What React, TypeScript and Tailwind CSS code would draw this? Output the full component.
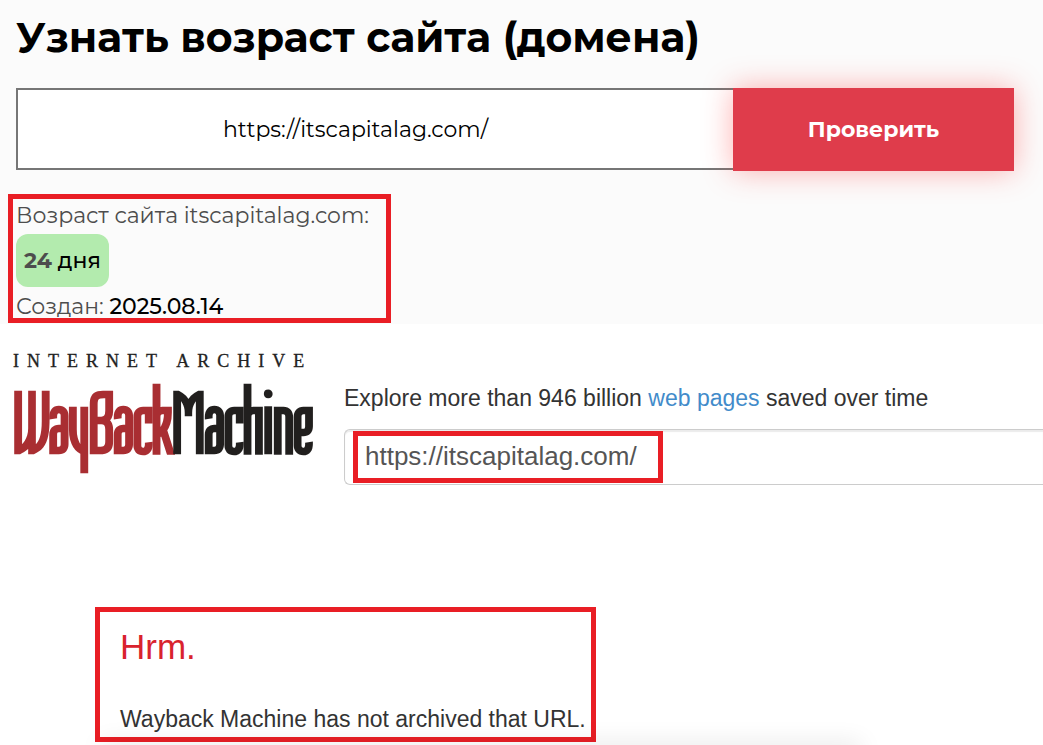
import React, { useState } from "react";

const WaybackLogo: React.FC = () => {
  return (
    <svg
      viewBox="0 0 304 124"
      className="w-[304px] shrink-0 overflow-visible"
      role="img"
      aria-label="Internet Archive Wayback Machine"
    >
      <text x="1" y="18" fontSize="18" letterSpacing="8" fill="#222222" stroke="#222222" strokeWidth="0.3" fontFamily="'Liberation Serif', serif">
        INTERNET ARCHIVE
      </text>
      <text
        x="1"
        y="103"
        fontSize="86"
        fontWeight="700"
        strokeWidth="2"
        fontFamily="'Tulpen One', 'League Gothic', 'Roboto Condensed', sans-serif"
      >
        <tspan fill="#a92e32" stroke="#a92e32">WayBack</tspan>
        <tspan fill="#211f1e" stroke="#211f1e">Machine</tspan>
      </text>
    </svg>
  );
};

const App: React.FC = () => {
  const [domain, setDomain] = useState("https://itscapitalag.com/");
  const [archiveUrl, setArchiveUrl] = useState("https://itscapitalag.com/");

  return (
    <div className="min-h-screen overflow-hidden bg-white font-['Liberation_Sans',Arial,sans-serif] text-[#333333]">
      <section className="bg-[#fbfbfb] font-[Montserrat,Inter,sans-serif]">
        <h1 className="pl-4 pt-3 text-[41px] leading-[50px] font-bold text-black">
          Узнать возраст сайта (домена)
        </h1>

        <form className="mt-[26px] ml-4 mr-[29px] flex items-start" onSubmit={(e) => e.preventDefault()}>
          <input
            type="text"
            aria-label="Адрес сайта"
            value={domain}
            onChange={(e) => setDomain(e.target.value)}
            className="h-[82px] min-w-0 flex-1 border-2 border-r-0 border-[#767676] bg-white pr-10 text-center text-[22px] text-black outline-none"
          />
          <button
            type="submit"
            className="h-[83px] w-[281px] bg-[#df3c4b] text-[22px] font-bold text-white shadow-[0_0_30px_rgba(255,60,60,0.4)]"
          >
            Проверить
          </button>
        </form>

        <div className="mt-[23px] ml-2 h-[130px] text-[22px] text-[#4d4d4d]">
          <div className="h-[129px] w-[383px] border-5 border-[#e91e25] pl-[3px]">
            <p className="leading-[34px] whitespace-nowrap">Возраст сайта itscapitalag.com:</p>
            <p className="mt-px w-fit rounded-xl bg-[#b3ebae] px-2 leading-[53px] font-medium text-black">
              <b className="text-[#4d4d4d]">24</b> дня
            </p>
            <p className="mt-1 leading-8">
              Создан: <span className="font-medium text-black">2025.08.14</span>
            </p>
          </div>
        </div>
      </section>

      <section className="flex items-start gap-7 pt-[25px] pl-3">
        <WaybackLogo />
        <div className="min-w-0 flex-1 pt-8">
          <p className="text-[23px] leading-[34px] whitespace-nowrap">
            Explore more than 946 billion{" "}
            <a href="#" className="text-[#428bca]">
              web pages
            </a>{" "}
            saved over time
          </p>
          <div className="relative mt-[14px]">
            <input
              type="text"
              aria-label="URL"
              value={archiveUrl}
              onChange={(e) => setArchiveUrl(e.target.value)}
              className="h-14 w-full rounded-l-md border border-r-0 border-[#cccccc] bg-white pb-[2px] pl-5 text-[26px] text-[#555555] shadow-[inset_0_2px_1px_rgba(0,0,0,0.08)] outline-none"
            />
            <span className="pointer-events-none absolute top-[2px] left-[9px] h-[52px] w-[310px] border-5 border-[#e91e25]" />
          </div>
        </div>
      </section>

      <section className="mt-[122px] ml-[95px] h-[135px] w-[501px] border-5 border-[#e91e25] px-5 pt-3">
        <h2 className="text-[35px] leading-[46px] text-[#d9232e]">Hrm.</h2>
        <p className="mt-[34px] text-[23px] leading-[30px] whitespace-nowrap">
          Wayback Machine has not archived that URL.
        </p>
      </section>

      <div className="mt-[9px] mr-[190px] ml-[110px] h-0 shadow-[0_0_24px_8px_rgba(0,0,0,0.10)]" />
    </div>
  );
};

export default App;
